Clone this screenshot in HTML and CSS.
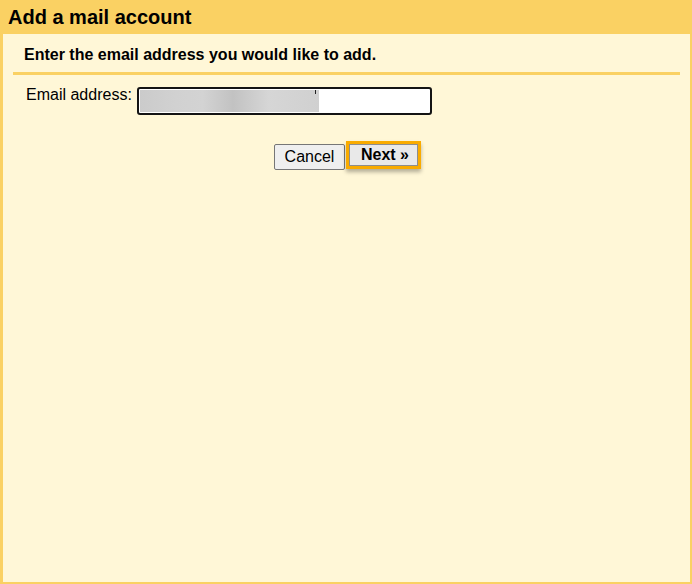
FILE: index.html
```html
<!DOCTYPE html>
<html lang="en">
<head>
<meta charset="utf-8">
<title>Add a mail account</title>
<link rel="stylesheet" href="styles.css">
</head>
<body>
<div class="dialog">
  <div class="header"><h1 class="title">Add a mail account</h1></div>
  <div class="body">
    <div class="section">
      <div class="subtitle">Enter the email address you would like to add.</div>
    </div>
    <div class="field-row">
      <label class="label">Email address:</label>
      <div class="input"><div class="redacted"><span class="caret"></span></div></div>
    </div>
    <div class="actions">
      <button class="btn cancel" type="button">Cancel</button>
      <button class="btn next" type="button">Next »</button>
    </div>
  </div>
</div>
</body>
</html>
```
FILE: styles.css
```css
html, body {
  margin: 0;
  padding: 0;
  background: #fff7d7;
}
body {
  font-family: "Liberation Sans", Arial, sans-serif;
  color: #000;
}
.dialog {
  width: 692px;
  height: 584px;
  display: flex;
  flex-direction: column;
}
.header {
  height: 34px;
  background: #fad163;
  flex: none;
}
.title {
  margin: 0;
  padding-left: 8px;
  font-size: 20px;
  font-weight: bold;
  line-height: 34px;
  color: #000;
}
.body {
  flex: 1;
  background: #fff7d7;
  border-left: 3px solid #fad163;
  border-right: 2px solid #fad163;
  border-bottom: 2px solid #fad163;
  padding-top: 11px;
}
.section {
  margin: 0 10px;
  border-bottom: 3px solid #fad163;
  padding: 0 0 7px 11px;
}
.subtitle {
  font-size: 16px;
  font-weight: bold;
  line-height: 20px;
}
.field-row {
  display: flex;
  align-items: flex-start;
  gap: 5px;
  margin: 12px 0 0 23px;
}
.label {
  font-size: 16px;
  line-height: 18px;
  margin-top: -1px;
}
.input {
  box-sizing: border-box;
  width: 295px;
  height: 28px;
  border: 2px solid #141414;
  border-radius: 3px;
  background: #fff;
  padding: 0;
}
.redacted {
  position: relative;
  width: 179px;
  height: 22px;
  margin: 1px 0 0 1px;
  background: linear-gradient(90deg, #cbcbcb 0%, #d1d1d1 20%, #d3d3d3 35%, #c2c2c2 52%, #d6d6d6 72%, #d0d0d0 100%);
}
.caret {
  position: absolute;
  right: 3px;
  top: 0;
  width: 1px;
  height: 4px;
  background: #222;
}
.actions {
  display: flex;
  justify-content: center;
  align-items: flex-start;
  gap: 1px;
  margin-top: 26px;
  padding-left: 2px;
}
.btn {
  font-family: "Liberation Sans", Arial, sans-serif;
  font-size: 16px;
  color: #000;
  cursor: pointer;
  box-sizing: border-box;
  margin: 0;
  text-align: center;
}
.cancel {
  margin-top: 3px;
  width: 71px;
  height: 26px;
  line-height: 24px;
  padding: 0;
  background: #efefef;
  border: 1px solid #767676;
  border-radius: 2px;
}
.next {
  width: 75px;
  height: 28px;
  line-height: 22px;
  padding: 0 0 0 3px;
  font-weight: bold;
  background: #e9e9e9;
  border: 3px solid #f9ab00;
  border-radius: 0;
  box-shadow: inset 0 0 0 1px #8d8d8d, 0 3px 4px rgba(0, 0, 0, 0.3);
}
```
